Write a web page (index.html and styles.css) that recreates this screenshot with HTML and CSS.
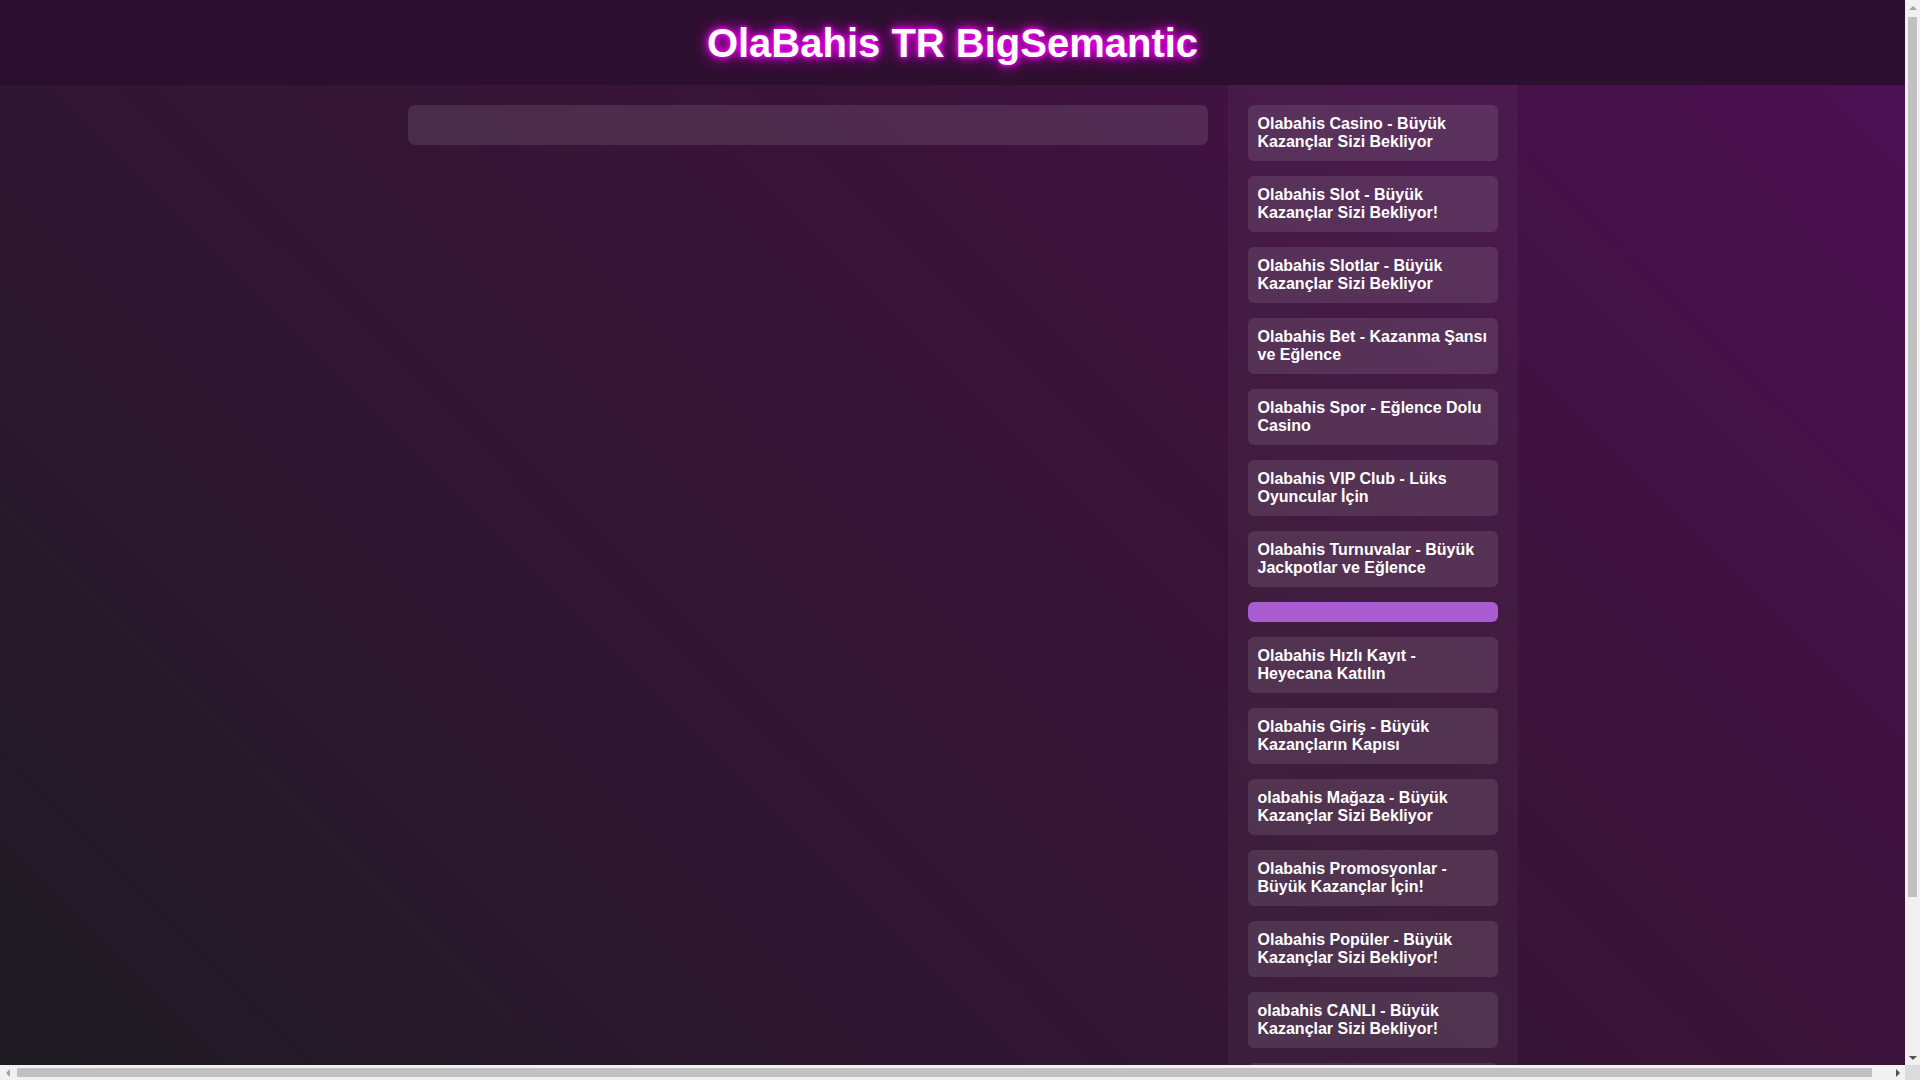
FILE: index.html
```html
<!DOCTYPE html>
<html lang="tr">
<head>
<meta charset="utf-8">
<title>OlaBahis TR BigSemantic</title>
<link rel="stylesheet" href="styles.css">
</head>
<body>
<header class="site-header">
  <h1 class="site-title">OlaBahis TR BigSemantic</h1>
</header>
<div class="content">
  <div class="container">
    <main class="main-col">
      <div class="main-box"></div>
    </main>
    <aside class="sidebar">
      <a class="side-link" href="#">Olabahis Casino - Büyük Kazançlar Sizi Bekliyor</a>
      <a class="side-link" href="#">Olabahis Slot - Büyük Kazançlar Sizi Bekliyor!</a>
      <a class="side-link" href="#">Olabahis Slotlar - Büyük Kazançlar Sizi Bekliyor</a>
      <a class="side-link" href="#">Olabahis Bet - Kazanma Şansı ve Eğlence</a>
      <a class="side-link" href="#">Olabahis Spor - Eğlence Dolu Casino</a>
      <a class="side-link" href="#">Olabahis VIP Club - Lüks Oyuncular İçin</a>
      <a class="side-link" href="#">Olabahis Turnuvalar - Büyük Jackpotlar ve Eğlence</a>
      <a class="side-link side-link-active" href="#"></a>
      <a class="side-link" href="#">Olabahis Hızlı Kayıt - Heyecana Katılın</a>
      <a class="side-link" href="#">Olabahis Giriş - Büyük Kazançların Kapısı</a>
      <a class="side-link" href="#">olabahis Mağaza - Büyük Kazançlar Sizi Bekliyor</a>
      <a class="side-link" href="#">Olabahis Promosyonlar - Büyük Kazançlar İçin!</a>
      <a class="side-link" href="#">Olabahis Popüler - Büyük Kazançlar Sizi Bekliyor!</a>
      <a class="side-link" href="#">olabahis CANLI - Büyük Kazançlar Sizi Bekliyor!</a>
      <a class="side-link" href="#">Olabahis Bonus - Büyük Kazançlar Sizi Bekliyor</a>
      <a class="side-link" href="#">Olabahis Mobil - Her Yerde Eğlence</a>
    </aside>
  </div>
</div>
<div class="fake-vscroll" aria-hidden="true">
  <span class="arrow arrow-up"></span>
  <span class="vthumb"></span>
  <span class="arrow arrow-down"></span>
</div>
<div class="fake-hscroll" aria-hidden="true">
  <span class="arrow arrow-left"></span>
  <span class="hthumb"></span>
  <span class="arrow arrow-right"></span>
</div>
<div class="fake-corner" aria-hidden="true"></div>
</body>
</html>
```
FILE: styles.css
```css
html {
  background: #2a1530;
  overflow: hidden;
}
body {
  margin: 0;
  width: 1905px;
  min-height: 100vh;
  font-family: "Liberation Sans", Arial, sans-serif;
  color: #ffffff;
  background: linear-gradient(45deg, #1d1b21 0%, #2e1730 30%, #3a1438 60%, #4c0f54 100%);
  background-attachment: fixed;
}
.site-header {
  background: #2c0f2e;
  padding: 20px 0 19px;
  text-align: center;
}
.site-title {
  margin: 0;
  font-size: 40px;
  font-weight: bold;
  line-height: 46px;
  color: #ffffff;
  text-shadow: 0 0 4px #ff00ff, 0 0 10px #ff00ff, 0 0 18px #d000d0;
}
.content {
  width: 100%;
  padding: 0 10px;
}
.container {
  width: 1110px;
  margin: 0 auto;
  display: flex;
  align-items: stretch;
}
.main-col {
  width: 800px;
  padding-top: 20px;
}
.main-box {
  height: 40px;
  border-radius: 7px;
  background: rgba(255, 255, 255, 0.1);
}
.sidebar {
  width: 250px;
  margin-left: 20px;
  padding: 20px;
  background: rgba(255, 255, 255, 0.035);
  display: flex;
  flex-direction: column;
  gap: 15px;
}
.side-link {
  display: block;
  padding: 10px;
  border-radius: 6px;
  background: rgba(255, 255, 255, 0.1);
  color: #ffffff;
  font-size: 16px;
  font-weight: bold;
  line-height: 18px;
  text-decoration: none;
}
.side-link-active {
  height: 0;
  background: #a95bd0;
}

/* scrollbars as drawn in the reference */
.fake-vscroll {
  position: fixed;
  top: 0;
  right: 0;
  width: 15px;
  height: 1065px;
  background: #f1f1f1;
  display: flex;
  flex-direction: column;
  align-items: center;
}
.fake-hscroll {
  position: fixed;
  left: 0;
  bottom: 0;
  width: 1905px;
  height: 15px;
  background: #f1f1f1;
  display: flex;
  align-items: center;
}
.fake-corner {
  position: fixed;
  right: 0;
  bottom: 0;
  width: 15px;
  height: 15px;
  background: #dcdcdc;
}
.vthumb {
  flex: 0 0 auto;
  width: 9px;
  height: 880px;
  margin: 2px 0 auto;
  border-radius: 0;
  background: #c1c1c1;
}
.hthumb {
  flex: 0 0 auto;
  width: 1855px;
  height: 9px;
  margin: 0 auto 0 2px;
  background: #c1c1c1;
}
.arrow {
  flex: 0 0 15px;
  width: 15px;
  height: 15px;
  display: flex;
  align-items: center;
  justify-content: center;
  position: relative;
}
.arrow::after {
  content: "";
  width: 0;
  height: 0;
  border: 4px solid transparent;
}
.arrow-up::after {
  border-top: 0;
  border-bottom-color: #a3a3a3;
}
.arrow-down::after {
  border-bottom: 0;
  border-top-color: #505050;
}
.arrow-left::after {
  border-left: 0;
  border-right-color: #a3a3a3;
}
.arrow-right::after {
  border-right: 0;
  border-left-color: #505050;
}
```
